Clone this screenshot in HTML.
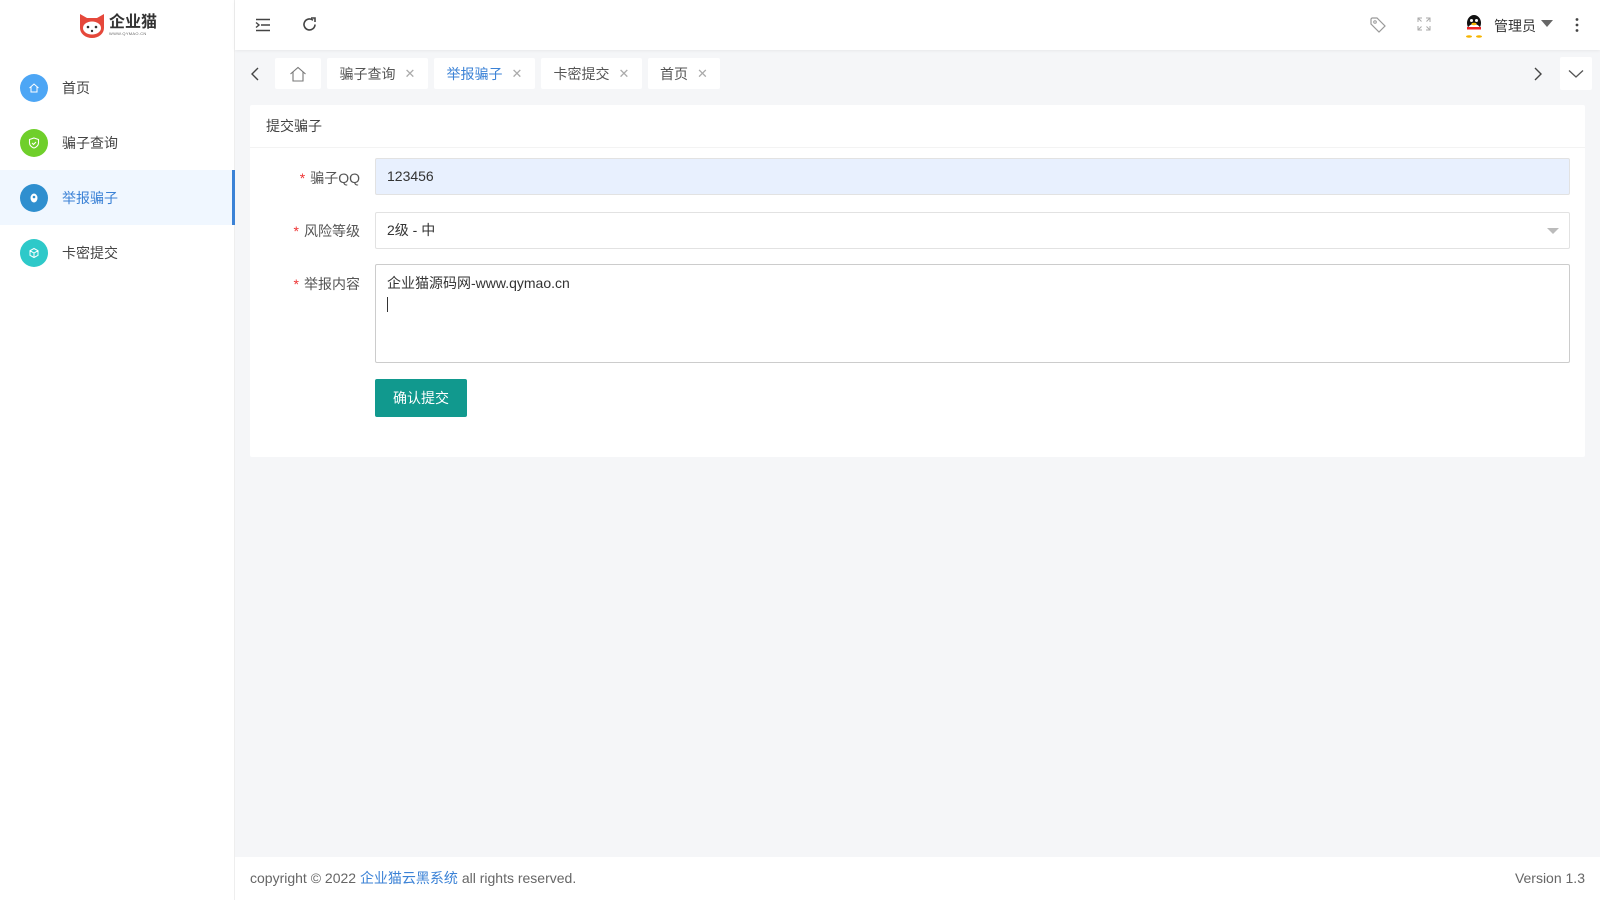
<!DOCTYPE html>
<html><head><meta charset="utf-8">
<style>
*{box-sizing:border-box;margin:0;padding:0}
body{width:1600px;height:900px;overflow:hidden;font-family:"Liberation Sans","Noto Sans CJK SC",sans-serif;font-size:14px;color:#444;background:#f5f6f8;position:relative}
.side{position:absolute;left:0;top:0;width:235px;height:900px;background:#fff;border-right:1px solid #eee}
.logo{position:absolute;left:78px;top:12px;display:flex;align-items:center}
.logo .t{font-weight:bold;font-size:16px;color:#333;line-height:17px}
.logo .s{font-size:4px;color:#666;letter-spacing:.3px}
.mi{position:absolute;left:0;width:235px;height:55px;display:flex;align-items:center}
.mi .c{width:28px;height:28px;border-radius:50%;margin-left:20px;margin-right:14px;display:flex;align-items:center;justify-content:center}
.mi.act{background:#f0f7ff;color:#3b82d6;border-right:3px solid #3b82d6}
.head{position:absolute;left:235px;top:0;right:0;height:50px;background:#fff;box-shadow:0 1px 3px rgba(0,0,0,.06)}
.tab{position:absolute;top:58px;height:31px;background:#fff;border-radius:2px;display:flex;align-items:center;justify-content:center;color:#555}
.tab .x{color:#aaa;margin-left:9px;font-size:13px}
.card{position:absolute;left:250px;top:105px;width:1335px;height:352px;background:#fff;border-radius:2px}
.ct{height:43px;border-bottom:1px solid #f3f3f3;padding-left:16px;line-height:43px}
.lab{position:absolute;right:1225px;font-size:14px;color:#555}
.lab b{color:#e33;font-weight:normal;margin-right:5px}
.inp{position:absolute;left:125px;width:1195px;border:1px solid #e2e2e2;border-radius:2px;padding-left:11px;color:#333}
.btn{position:absolute;left:125px;top:274px;width:92px;height:38px;background:#11998e;color:#fff;border-radius:2px;display:flex;align-items:center;justify-content:center}
.foot{position:absolute;left:235px;top:857px;right:0;height:43px;background:#fff;line-height:43px;padding:0 15px;color:#666}
</style></head><body>
<div class="side">
  <div class="logo">
    <svg width="28" height="26" viewBox="0 0 28 26"><path d="M2 2 L9 6 H19 L26 2 V16 A12 10 0 0 1 2 16Z" fill="#e5483b"/><ellipse cx="14" cy="16" rx="9" ry="6.5" fill="#fff"/><circle cx="10" cy="15" r="1.3" fill="#333"/><circle cx="18" cy="15" r="1.3" fill="#333"/><circle cx="14" cy="19" r="1.2" fill="#333"/></svg>
    <div style="margin-left:3px"><div class="t">企业猫</div><div class="s">WWW.QYMAO.CN</div></div>
  </div>
  <div class="mi" style="top:60px"><div class="c" style="background:#4da6f5"><svg width="12" height="12" viewBox="0 0 12 12"><path d="M1.5 6 L6 2 L10.5 6 M3 5 V10 H9 V5" fill="none" stroke="#fff" stroke-width="1"/></svg></div>首页</div>
  <div class="mi" style="top:115px"><div class="c" style="background:#6fcf2b"><svg width="12" height="12" viewBox="0 0 12 12"><path d="M6 1 L10.5 2.5 V6 C10.5 8.5 8 10.5 6 11 C4 10.5 1.5 8.5 1.5 6 V2.5Z M4 6 L5.5 7.5 L8 5" fill="none" stroke="#fff" stroke-width="1.1"/></svg></div>骗子查询</div>
  <div class="mi act" style="top:170px"><div class="c" style="background:#2f8fcf"><svg width="12" height="12" viewBox="0 0 12 12"><ellipse cx="6" cy="6" rx="3.5" ry="4.5" fill="#fff"/><circle cx="6" cy="5" r="1.3" fill="#2f8fcf"/></svg></div>举报骗子</div>
  <div class="mi" style="top:225px"><div class="c" style="background:#2ec9c9"><svg width="12" height="12" viewBox="0 0 12 12"><path d="M6 1.5 L10 3.7 V8.3 L6 10.5 L2 8.3 V3.7Z M2 3.7 L6 6 L10 3.7 M6 6 V10.5" fill="none" stroke="#fff" stroke-width="1"/></svg></div>卡密提交</div>
</div>
<div class="head">
  <svg style="position:absolute;left:20px;top:17px" width="16" height="16" viewBox="0 0 16 16"><path d="M1 2.5H15M6 8H15M1 13.5H15M1 5.5L4 8L1 10.5" fill="none" stroke="#444" stroke-width="1.4"/></svg>
  <svg style="position:absolute;left:66px;top:16px" width="17" height="17" viewBox="0 0 17 17"><path d="M14 8.5A5.5 5.5 0 1 1 12 4.2" fill="none" stroke="#444" stroke-width="1.6"/><path d="M10 2H14V6" fill="none" stroke="#444" stroke-width="1.6"/></svg>
  <svg style="position:absolute;left:1134px;top:16px" width="18" height="18" viewBox="0 0 18 18"><path d="M2 3V8L10 16L16 10L8 2H3Z" fill="none" stroke="#999" stroke-width="1.2"/><circle cx="6" cy="6" r="1.3" fill="none" stroke="#999"/></svg>
  <svg style="position:absolute;left:1182px;top:17px" width="14" height="14" viewBox="0 0 14 14"><path d="M1 5V1H5M9 1H13V5M13 9V13H9M5 13H1V9M1 1L4.5 4.5M13 1L9.5 4.5M13 13L9.5 9.5M1 13L4.5 9.5" fill="none" stroke="#aaa" stroke-width="1"/></svg>
  <svg style="position:absolute;left:1229px;top:14px" width="20" height="24" viewBox="0 0 20 24"><ellipse cx="10" cy="9" rx="7" ry="8" fill="#111"/><ellipse cx="10" cy="16" rx="6.5" ry="6" fill="#fff"/><path d="M3 13H17V15.5H3Z" fill="#e22"/><circle cx="7.5" cy="6.5" r="1.5" fill="#fff"/><circle cx="12.5" cy="6.5" r="1.5" fill="#fff"/><ellipse cx="10" cy="10" rx="2.5" ry="1.2" fill="#f5b400"/><ellipse cx="5" cy="22.5" rx="3" ry="1.3" fill="#f5b400"/><ellipse cx="15" cy="22.5" rx="3" ry="1.3" fill="#f5b400"/></svg>
  <span style="position:absolute;left:1259px;top:16px;color:#333">管理员</span>
  <svg style="position:absolute;left:1306px;top:20px" width="12" height="8" viewBox="0 0 12 8"><path d="M0 0H12L6 7Z" fill="#666"/></svg>
  <svg style="position:absolute;left:1340px;top:17px" width="4" height="16" viewBox="0 0 4 16"><circle cx="2" cy="2.5" r="1.4" fill="#444"/><circle cx="2" cy="8" r="1.4" fill="#444"/><circle cx="2" cy="13.5" r="1.4" fill="#444"/></svg>
</div>
<svg style="position:absolute;left:250px;top:66px" width="10" height="16" viewBox="0 0 10 16"><path d="M8 2L2 8L8 14" fill="none" stroke="#444" stroke-width="1.4"/></svg>
<div class="tab" style="left:275px;width:46px"><svg width="18" height="16" viewBox="0 0 18 16"><path d="M1.5 8L9 1.5L16.5 8M4 6V15H14V6" fill="none" stroke="#777" stroke-width="1.1"/></svg></div>
<div class="tab" style="left:327px;width:101px">骗子查询<span class="x">✕</span></div>
<div class="tab" style="left:434px;width:101px;color:#3b82d6">举报骗子<span class="x">✕</span></div>
<div class="tab" style="left:541px;width:101px">卡密提交<span class="x">✕</span></div>
<div class="tab" style="left:648px;width:72px">首页<span class="x">✕</span></div>
<svg style="position:absolute;left:1533px;top:66px" width="10" height="16" viewBox="0 0 10 16"><path d="M2 2L8 8L2 14" fill="none" stroke="#444" stroke-width="1.4"/></svg>
<div class="tab" style="left:1560px;width:32px;top:57px;height:33px"><svg width="16" height="10" viewBox="0 0 16 10"><path d="M1 1.5L8 8L15 1.5" fill="none" stroke="#555" stroke-width="1.3"/></svg></div>
<div class="card">
  <div class="ct">提交骗子</div>
  <div class="lab" style="top:63px"><b>*</b>骗子QQ</div>
  <div class="inp" style="top:53px;height:37px;background:#e8f0fe;line-height:35px">123456</div>
  <div class="lab" style="top:116px"><b>*</b>风险等级</div>
  <div class="inp" style="top:107px;height:37px;line-height:35px">2级 - 中<svg style="position:absolute;right:10px;top:15px" width="12" height="7" viewBox="0 0 12 7"><path d="M0 0H12L6 6Z" fill="#bbb"/></svg></div>
  <div class="lab" style="top:169px"><b>*</b>举报内容</div>
  <div class="inp" style="top:159px;height:99px;border-color:#ccc;padding-top:8px;line-height:20px">企业猫源码网-www.qymao.cn<br><span style="display:inline-block;width:1px;height:15px;background:#333;vertical-align:middle"></span></div>
  <div class="btn">确认提交</div>
</div>
<div class="foot">copyright © 2022 <span style="color:#3b82d6">企业猫云黑系统</span> all rights reserved.<span style="float:right">Version 1.3</span></div>
</body></html>
